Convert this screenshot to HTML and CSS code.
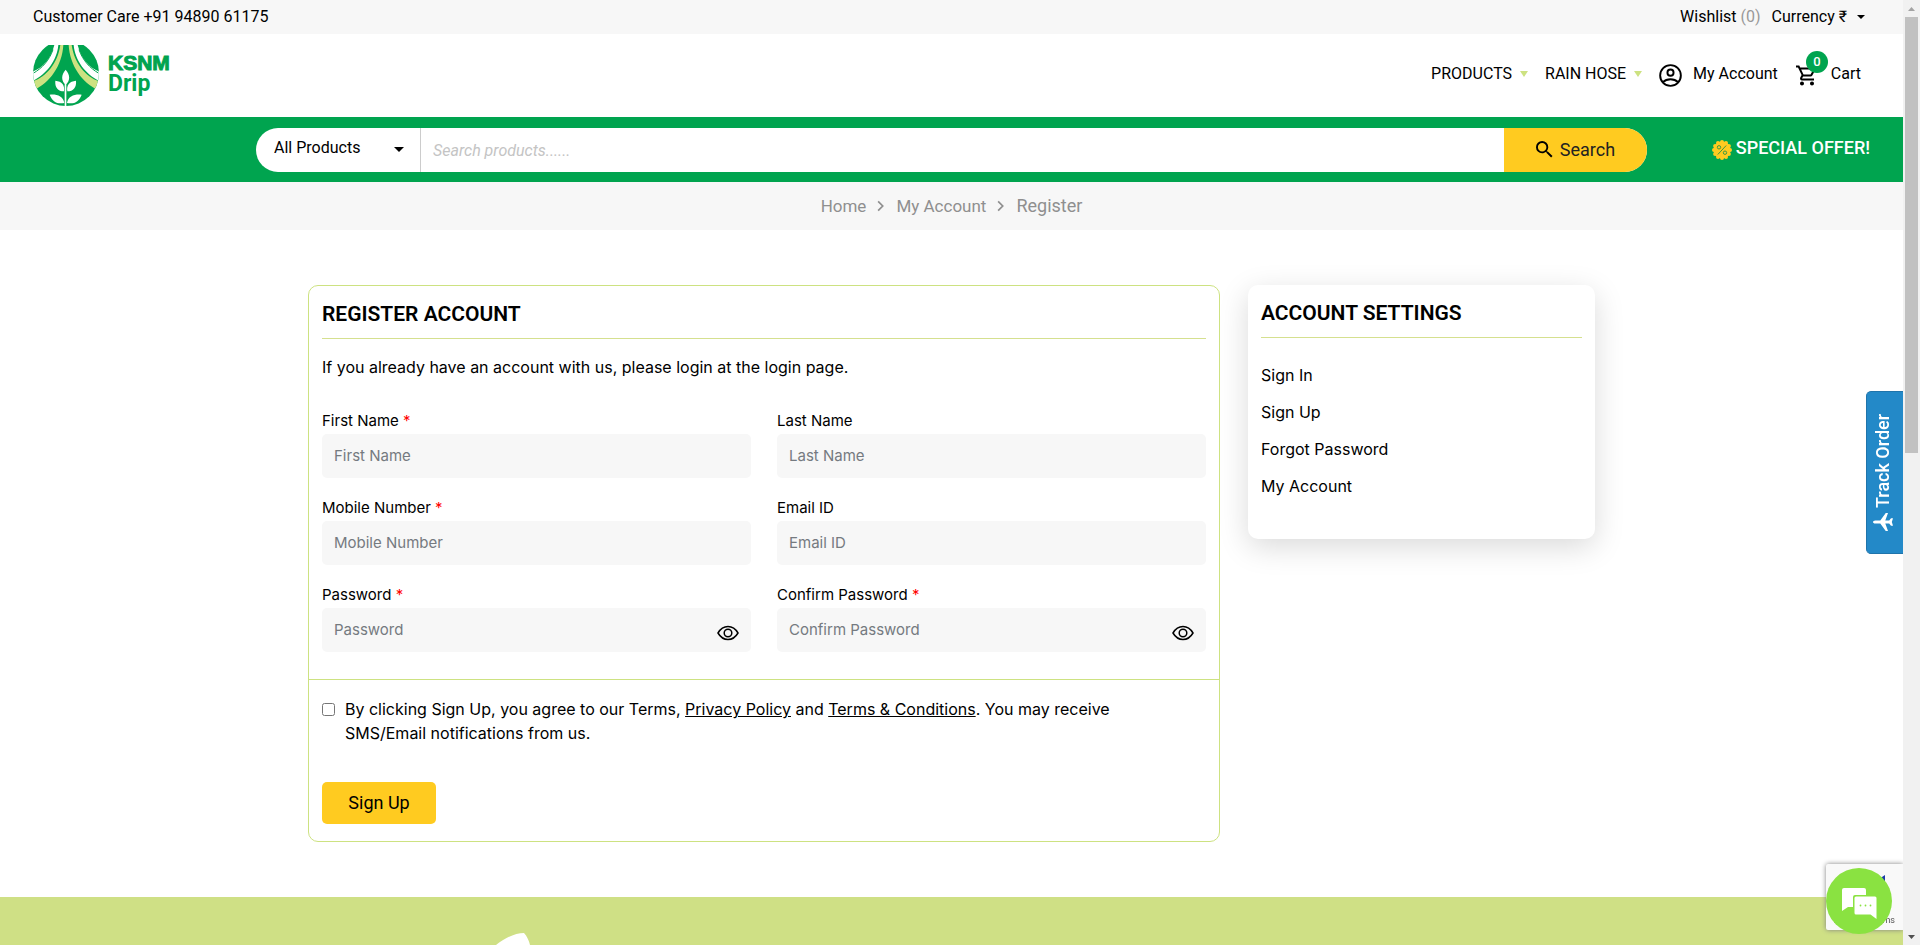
FILE: index.html
```html
<!DOCTYPE html>
<html lang="en">
<head>
<meta charset="utf-8">
<title>Register Account - KSNM Drip</title>
<link rel="stylesheet" href="styles.css">
</head>
<body>
<div class="topbar">
  <a class="care" href="#">Customer Care +91 94890 61175</a>
  <div class="topbar-links">
    <a href="#">Wishlist <span class="muted">(0)</span></a>
    <button class="currency" type="button">Currency ₹ <svg class="caret" viewBox="0 0 10 5"><path d="M0 0h10L5 5z"/></svg></button>
  </div>
</div>

<header class="header">
  <a class="logo" href="#">
    <svg class="logo-mark" viewBox="0 0 198 183" aria-hidden="true">
      <defs><clipPath id="disc"><circle cx="99" cy="84" r="99"/></clipPath></defs>
      <g clip-path="url(#disc)">
        <rect width="198" height="183" fill="#00a44f"/>
        <path d="M82 0h9C88 62 48 116 4 134L-4 110C38 98 74 56 82 0z" fill="#cde281"/>
        <path d="M64 0h12C72 48 38 90-2 108v-28C28 70 54 40 64 0z" fill="#fff"/>
        <path d="M60 14C48 48 26 70 2 84" fill="none" stroke="#00a44f" stroke-width="3"/>
        <path d="M116 0h-9c3 62 43 116 87 134l8-24C160 98 124 56 116 0z" fill="#cde281"/>
        <path d="M134 0h-12c4 48 38 90 78 108V80C170 70 144 40 134 0z" fill="#fff"/>
        <path d="M138 14C150 48 172 70 196 84" fill="none" stroke="#00a44f" stroke-width="3"/>
        <g fill="#fff">
          <path d="M98 74c14 16 14 32 0 46c-14-14-14-30 0-46zM95 118h5v65h-5z"/>
          <path d="M67 107c20 2 29 13 26 32c-18 0-28-12-26-32zM129 107c-20 2-29 13-26 32c18 0 28-12 26-32z"/>
          <path d="M50 149c22-2 40 4 44 25c-22 4-36-4-44-25zM146 149c-22-2-40 4-44 25c22 4 36-4 44-25z"/>
        </g>
      </g>
    </svg>
    <span class="logo-text"><span class="logo-top">KSNM</span><span class="logo-bottom">Drip</span></span>
  </a>
  <nav class="nav">
    <a class="menu" href="#">PRODUCTS <svg viewBox="0 0 8 6"><path d="M0 0h8L4 6z"/></svg></a>
    <a class="menu" href="#">RAIN HOSE <svg viewBox="0 0 8 6"><path d="M0 0h8L4 6z"/></svg></a>
    <a class="account" href="#">
      <svg viewBox="0 0 24 24" fill="none" stroke="#000" stroke-width="2"><circle cx="12" cy="12" r="10.8"/><circle cx="12" cy="9" r="3.2"/><path d="M4.200 19c4-4.200 11.600-4.200 15.600 0"/></svg>
      <span class="nav-text">My Account</span></a>
    <a class="cart" href="#">
      <span class="cart-icon"><svg viewBox="1 2 21 20"><path d="M15.550 13c.75 0 1.410-.41 1.750-1.030l3.580-6.490A.996.996 0 0 0 20.010 4H5.210l-.94-2H1v2h2l3.600 7.590-1.350 2.440C4.520 15.370 5.480 17 7 17h12v-2H7l1.100-2h7.450zM6.160 6h12.150l-2.760 5H8.530L6.160 6zM7 18c-1.100 0-1.990.9-1.990 2S5.900 22 7 22s2-.9 2-2-.9-2-2-2zm10 0c-1.100 0-1.990.9-1.990 2s.89 2 1.990 2 2-.9 2-2-.9-2-2-2z"/></svg><span class="badge">0</span></span>
      <span class="nav-text">Cart</span></a>
  </nav>
</header>

<div class="searchbar">
  <form class="search">
    <div class="category">
      <select aria-label="Category"><option>All Products</option></select>
      <svg viewBox="0 0 10 5"><path d="M0 0h10L5 5z"/></svg>
    </div>
    <input type="text" aria-label="Search products" placeholder="Search products......">
    <button type="submit"><svg viewBox="3 3 18 18"><path d="M15.500 14h-.79l-.28-.27A6.471 6.471 0 0 0 16 9.500 6.500 6.500 0 1 0 9.500 16c1.610 0 3.090-.59 4.230-1.570l.27.28v.79l5 4.990L20.490 19l-4.990-5zm-6 0C7.010 14 5 11.990 5 9.500S7.010 5 9.500 5 14 7.010 14 9.500 11.990 14 9.500 14z"/></svg>Search</button>
  </form>
  <a class="offer" href="#">
    <svg viewBox="0 0 20 20"><g fill="#ffcb20"><circle cx="10" cy="10" r="8.500"/><circle cx="10" cy="2" r="2"/><circle cx="14" cy="3.100" r="2"/><circle cx="16.900" cy="6" r="2"/><circle cx="18" cy="10" r="2"/><circle cx="16.900" cy="14" r="2"/><circle cx="14" cy="16.900" r="2"/><circle cx="10" cy="18" r="2"/><circle cx="6" cy="16.900" r="2"/><circle cx="3.100" cy="14" r="2"/><circle cx="2" cy="10" r="2"/><circle cx="3.100" cy="6" r="2"/><circle cx="6" cy="3.100" r="2"/></g><g fill="none" stroke="#3d9a3f" stroke-width="1"><circle cx="7" cy="7.300" r="1.700"/><circle cx="13" cy="12.700" r="1.700"/><path d="M14.200 5.500L5.800 14.500"/></g></svg>
    <span>SPECIAL OFFER!</span></a>
</div>

<nav class="breadcrumb" aria-label="Breadcrumb">
  <a href="#">Home</a>
  <svg viewBox="0 0 7 10"><path d="M1 1l4 4-4 4"/></svg>
  <a href="#">My Account</a>
  <svg viewBox="0 0 7 10"><path d="M1 1l4 4-4 4"/></svg>
  <span class="current">Register</span>
</nav>

<main class="content">
  <form class="register">
    <div class="register-body">
      <h1 class="title">REGISTER ACCOUNT</h1>
      <p class="intro">If you already have an account with us, please login at the login page.</p>
      <div class="fields">
        <div class="field"><label for="first">First Name <span class="req">*</span></label><input id="first" type="text" placeholder="First Name"></div>
        <div class="field"><label for="last">Last Name</label><input id="last" type="text" placeholder="Last Name"></div>
        <div class="field"><label for="mobile">Mobile Number <span class="req">*</span></label><input id="mobile" type="tel" placeholder="Mobile Number"></div>
        <div class="field"><label for="email">Email ID</label><input id="email" type="email" placeholder="Email ID"></div>
        <div class="field"><label for="pass">Password <span class="req">*</span></label>
          <div class="secret"><input id="pass" type="password" placeholder="Password"><button type="button" aria-label="Show password"><svg viewBox="0 0 22 16"><path d="M1 8C6-.6 16-.6 21 8C16 16.600 6 16.600 1 8z"/><circle cx="11" cy="8" r="3.800"/></svg></button></div></div>
        <div class="field"><label for="confirm">Confirm Password <span class="req">*</span></label>
          <div class="secret"><input id="confirm" type="password" placeholder="Confirm Password"><button type="button" aria-label="Show password"><svg viewBox="0 0 22 16"><path d="M1 8C6-.6 16-.6 21 8C16 16.600 6 16.600 1 8z"/><circle cx="11" cy="8" r="3.800"/></svg></button></div></div>
      </div>
    </div>
    <div class="register-foot">
      <div class="agree">
        <input id="agree" type="checkbox">
        <label for="agree">By clicking Sign Up, you agree to our Terms, <a href="#">Privacy Policy</a> and <a href="#">Terms &amp; Conditions</a>. You may receive SMS/Email notifications from us.</label>
      </div>
      <button class="signup" type="submit">Sign Up</button>
    </div>
  </form>
  <aside class="settings">
    <h2 class="title">ACCOUNT SETTINGS</h2>
    <ul>
      <li><a href="#">Sign In</a></li>
      <li><a href="#">Sign Up</a></li>
      <li><a href="#">Forgot Password</a></li>
      <li><a href="#">My Account</a></li>
    </ul>
  </aside>
</main>

<footer class="footer">
  <svg viewBox="0 0 34 12"><path d="M0 12C10 4 20 0 28 0C31 3 33 8 34 12z"/></svg>
</footer>

<button class="track" type="button"><svg viewBox="0 0 22 20"><path d="M22 10c0-1-1-1.600-2.500-1.600H14L8 0H5.500l3 8.400H4.200L2.200 6H0l1.300 4L0 14h2.200l2-2.400h4.300L5.500 20H8l6-8.400h5.500C21 11.600 22 11 22 10z"/></svg>Track Order</button>

<div class="captcha">
  <svg viewBox="0 0 6 8"><path d="M6 0v8L0 4z"/></svg>
  <span>Privacy - Terms</span>
</div>
<button class="chat" type="button" aria-label="Chat"><svg viewBox="0 0 35 31"><path d="M2 0h20a2 2 0 0 1 2 2v5H13a2 2 0 0 0-2 2v10H6l-6 4V2a2 2 0 0 1 2-2z"/><path d="M14 8.500h19a1.500 1.500 0 0 1 1.500 1.500v21l-6-4.500H14a1.500 1.500 0 0 1-1.500-1.500V10A1.500 1.500 0 0 1 14 8.500z"/><g class="dots"><circle cx="18.500" cy="17.500" r=".9"/><circle cx="23.500" cy="17.500" r=".9"/><circle cx="28.500" cy="17.500" r=".9"/></g></svg></button>

<div class="scrollbar" aria-hidden="true">
  <svg viewBox="0 0 17 17"><path d="M5 11h7l-3.500-4z" fill="#a3a3a3"/></svg>
  <div class="thumb"></div>
  <svg viewBox="0 0 17 17"><path d="M5 7h7l-3.500 4z" fill="#505050"/></svg>
</div>
</body>
</html>
```

FILE: styles.css
```css
* { box-sizing: border-box; }
body {
  margin: 0;
  padding-right: 17px;
  min-height: 100vh;
  display: flex;
  flex-direction: column;
  overflow: hidden;
  background: #fff;
  color: #000;
  font: 16px/24px Roboto, "Liberation Sans", sans-serif;
}
a { color: inherit; text-decoration: none; }
button, input, select { font: inherit; color: inherit; border: 0; margin: 0; padding: 0; background: none; }
svg { display: block; flex: none; }

.topbar {
  display: flex;
  justify-content: space-between;
  align-items: center;
  height: 34px;
  padding: 0 38px 0 33px;
  background: #f7f7f7;
}
.topbar-links { display: flex; gap: 11px; }
.muted { color: #999; }
.currency { display: flex; align-items: center; gap: 10px; }
.caret { width: 8px; height: 4px; }

.header {
  display: flex;
  justify-content: space-between;
  align-items: center;
  height: 83px;
  padding: 0 42px 0 33px;
}
.logo { display: flex; align-items: center; gap: 9px; color: #00a44f; }
.logo-mark { width: 66px; height: 61px; }
.logo-text { display: flex; flex-direction: column; padding-bottom: 4px; font-weight: 700; }
.logo-top { font: 900 21px/20px "Liberation Sans", Arial, sans-serif; -webkit-text-stroke: 1px #00a44f; }
.logo-bottom { font-size: 23px; line-height: 22px; }
.nav { display: flex; align-items: center; }
.menu { display: flex; align-items: center; gap: 8px; margin-right: 17px; padding-bottom: 4px; }
.menu svg { width: 8px; height: 6px; fill: #cde281; }
.nav-text { padding-bottom: 3px; }
.account { display: flex; align-items: center; gap: 11px; margin-right: 18px; }
.account svg { width: 23px; height: 23px; }
.cart { display: flex; align-items: center; gap: 14px; }
.cart-icon { position: relative; }
.cart-icon svg { width: 21px; height: 23px; }
.badge {
  position: absolute;
  top: -13px;
  left: 10px;
  width: 22px;
  height: 22px;
  border-radius: 50%;
  background: #00a44f;
  color: #fff;
  font-size: 13px;
  font-weight: 500;
  line-height: 22px;
  text-align: center;
}

.searchbar {
  display: grid;
  grid-template-columns: 223px 1fr 223px;
  align-items: center;
  height: 65px;
  padding: 0 33px;
  background: #00a44f;
}
.search {
  grid-column: 2;
  display: flex;
  height: 44px;
  border-radius: 22px;
  overflow: hidden;
  background: #fff;
}
.category { display: grid; align-items: center; width: 165px; border-right: 1px solid #ccc; }
.category select { grid-area: 1 / 1; appearance: none; width: 100%; height: 100%; padding: 0 18px 4px; outline: 0; }
.category svg { grid-area: 1 / 1; justify-self: end; width: 10px; height: 5px; margin-right: 16px; pointer-events: none; }
.search input { flex: 1; min-width: 0; padding: 2px 12px 0; outline: 0; }
.search input::placeholder { color: #c4c4c4; font-style: italic; }
.search button {
  display: flex;
  align-items: center;
  justify-content: center;
  gap: 7px;
  width: 143px;
  background: #ffcb20;
  color: #222;
  font-size: 18px;
}
.search button svg { width: 17px; height: 17px; fill: #000; }
.offer { display: flex; align-items: center; justify-content: flex-end; gap: 4px; color: #fff; font-size: 18px; font-weight: 500; }
.offer span { padding-bottom: 3px; }
.offer svg { width: 20px; height: 20px; }

.breadcrumb {
  display: flex;
  align-items: center;
  justify-content: center;
  gap: 11px;
  height: 48px;
  background: #f7f7f7;
  color: #8f8f8f;
  font-size: 17px;
}
.breadcrumb svg { width: 8px; height: 12px; fill: none; stroke: #8f8f8f; stroke-width: 1.5; }
.current { font-size: 18px; }

.content {
  display: grid;
  grid-template-columns: 912fr 347fr;
  gap: 28px;
  align-items: start;
  width: 100%;
  max-width: 1319px;
  margin: 0 auto;
  padding: 55px 16px;
  font-family: Inter, Roboto, sans-serif;
}
.title {
  margin: 0;
  padding-bottom: 10px;
  border-bottom: 1px solid #d5e08f;
  font-family: Roboto, sans-serif;
  font-size: 21px;
  font-weight: 600;
  line-height: 28px;
}
.register { border: 1px solid #cde281; border-radius: 10px; }
.register-body { padding: 14px 13px 27px; }
.intro { margin: 16px 0 29px; }
.fields { display: grid; grid-template-columns: 1fr 1fr; gap: 17px 26px; }
.field label { display: block; font-size: 15px; line-height: 26px; }
.req { color: #f00; }
.field input {
  display: block;
  width: 100%;
  height: 44px;
  padding: 0 12px 2px;
  border-radius: 5px;
  background: #f7f7f7;
  font-size: 15px;
}
.field input::placeholder { color: #757a80; }
.secret { display: grid; align-items: center; }
.secret input, .secret button { grid-area: 1 / 1; }
.secret button { justify-self: end; margin: 5px 12px 0 0; }
.secret svg { width: 22px; height: 16px; fill: none; stroke: #000; stroke-width: 1.5; }
.register-foot { padding: 17px 13px; border-top: 1px solid #cde281; }
.agree { display: flex; align-items: flex-start; gap: 10px; max-width: 820px; }
.agree input { width: 13px; height: 13px; margin: 6px 0 0; }
.agree a { text-decoration: underline; }
.signup {
  margin-top: 37px;
  width: 114px;
  height: 42px;
  border-radius: 5px;
  background: #ffcb20;
  font-family: Roboto, sans-serif;
  font-size: 18px;
}
.settings { padding: 14px 13px 34px; border-radius: 10px; background: #fff; box-shadow: 0 8px 30px rgba(0, 0, 0, .15); }
.settings ul { list-style: none; margin: 19px 0 0; padding: 0; }
.settings li { padding: 6px 0 7px; }

.footer { flex: 1; min-height: 48px; padding: 36px 0 0 496px; background: #cfe085; }
.footer svg { width: 34px; height: 12px; fill: #fff; }

.track {
  position: fixed;
  top: 391px;
  right: 17px;
  display: flex;
  align-items: center;
  justify-content: center;
  gap: 4px;
  width: 37px;
  height: 163px;
  padding-left: 3px;
  border: 1px solid #1f74ab;
  border-left: 0;
  border-radius: 0 5px 5px 0;
  background: #2389c8;
  color: #fff;
  font-size: 18px;
  font-weight: 500;
  writing-mode: vertical-rl;
  transform: rotate(180deg);
}
.track svg { width: 20px; height: 20px; fill: #fff; }

.captcha {
  position: fixed;
  right: 17px;
  bottom: 15px;
  display: flex;
  flex-direction: column;
  justify-content: space-between;
  align-items: flex-end;
  width: 77px;
  height: 66px;
  padding: 11px 8px 3px 0;
  border-radius: 2px 0 0 2px;
  background: #f9f9f9;
  box-shadow: 0 0 5px #808080;
  clip-path: inset(-8px 0 -8px -8px);
  color: #555;
  font-size: 9px;
  line-height: 14px;
  white-space: nowrap;
}
.captcha svg { width: 6px; height: 8px; margin-right: 10px; fill: #1c3aa9; }
.chat {
  position: fixed;
  right: 28px;
  bottom: 11px;
  display: grid;
  place-items: center;
  width: 66px;
  height: 66px;
  border-radius: 50%;
  background: #8ae241;
}
.chat svg { width: 35px; height: 31px; margin-top: 4px; fill: #fff; }
.chat .dots { fill: #8ae241; }

.scrollbar {
  position: fixed;
  inset: 0 0 0 auto;
  display: flex;
  flex-direction: column;
  width: 17px;
  background: #f1f1f1;
}
.scrollbar svg { width: 17px; height: 17px; }
.thumb { height: 436px; margin: 0 2px auto; background: #c1c1c1; }
```
